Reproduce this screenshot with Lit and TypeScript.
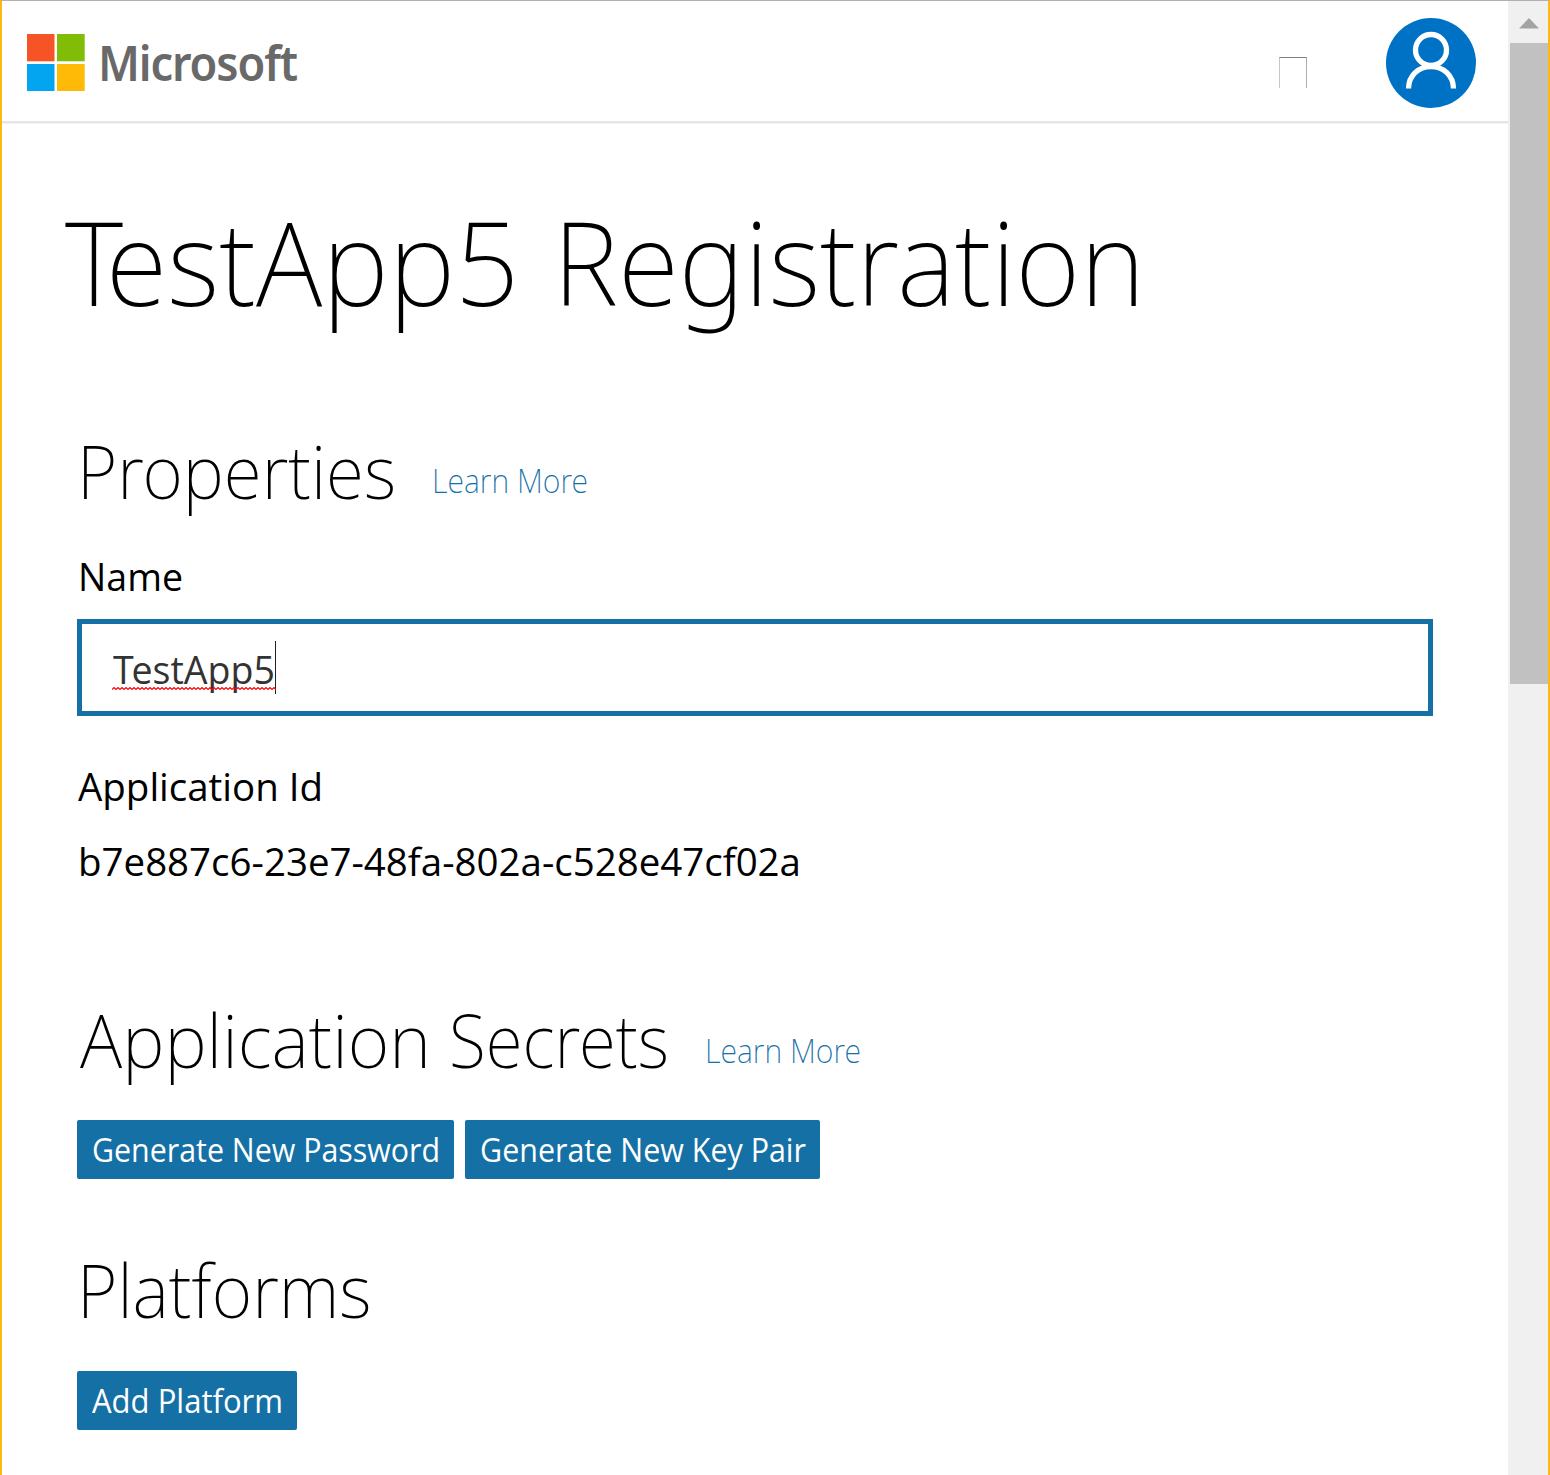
import { LitElement, html, css, svg } from "lit";
import { customElement, property } from "lit/decorators.js";

/** Single line of text condensed horizontally to a given advance width. */
@customElement("fit-text")
class FitText extends LitElement {
  @property({ type: Number }) width = 0;

  static styles = css`
    :host {
      display: block;
      flex: none;
      white-space: nowrap;
    }
    .run {
      display: inline-block;
      transform-origin: 0 50%;
    }
  `;

  updated() {
    const run = this.renderRoot.querySelector<HTMLElement>(".run")!;
    run.style.transform = "none";
    const natural = run.getBoundingClientRect().width;
    this.style.width = `${this.width}px`;
    run.style.transform = `scaleX(${this.width / natural})`;
  }

  render() {
    return html`<span class="run"><slot></slot></span>`;
  }
}

const avatar = svg`
  <circle cx="45" cy="45" r="45" fill="#0072c6"/>
  <g fill="none" stroke="#fff" stroke-width="5.300">
    <circle cx="45" cy="32" r="15.500"/>
    <path d="M22.500 70.500C22.700 57.500 32.500 48.600 45 48.600S67.300 57.500 67.500 70.500"/>
  </g>`;

@customElement("app-root")
class AppRoot extends LitElement {
  static styles = css`
    * {
      box-sizing: border-box;
    }
    :host {
      display: block;
      font-family: "Open Sans", "Noto Sans", sans-serif;
      color: #000;
    }
    .window {
      display: flex;
      height: 1475px;
      overflow: hidden;
      background: #fff;
      border: 2px solid #fdb913;
      border-top: 1px solid #b0b0b0;
      border-bottom: 0;
    }
    .page {
      flex: 1;
      min-width: 0;
    }
    .header {
      display: flex;
      align-items: flex-start;
      height: 122px;
      padding-left: 25px;
      padding-right: 32px;
      border-bottom: 2px solid #e5e5e5;
      box-shadow: 0 1px 0 #f3f3f3;
    }
    .logo {
      flex: none;
      margin-top: 33px;
    }
    .brand {
      margin: 28px 0 0 13px;
      font-family: "Noto Sans", "Open Sans", sans-serif;
      font-size: 49px;
      font-weight: 620;
      letter-spacing: -1.2px;
      line-height: 66px;
      color: #696969;
    }
    .glyph {
      width: 28px;
      height: 31px;
      margin: 56px 79px 0 auto;
      border: 1px solid #c6c6c6;
      border-top-color: #808080;
      border-right-color: #adadad;
      border-bottom: 0;
    }
    .avatar {
      flex: none;
      margin-top: 17px;
    }
    .title,
    .heading {
      display: flex;
      margin: 0;
      font-family: "Noto Sans", "Open Sans", sans-serif;
      font-weight: 250;
    }
    .title {
      gap: 34px;
      margin: 58px 0 0 63px;
      font-size: 117.2px;
      line-height: 160px;
    }
    .kern {
      letter-spacing: -0.15em;
    }
    .section {
      display: flex;
      align-items: flex-start;
      height: 100px;
      padding-left: 75px;
    }
    .heading {
      gap: 18px;
      font-size: 74.5px;
      line-height: 100px;
    }
    .properties {
      margin-top: 79px;
    }
    .secrets {
      margin-top: 103px;
      padding-left: 78px;
    }
    .platforms {
      margin-top: 60px;
    }
    .learn {
      margin: 10px 0 0 36px;
      font-family: "Noto Sans", "Open Sans", sans-serif;
      font-size: 33.6px;
      font-weight: 250;
      line-height: 100px;
      color: #1570a6;
      text-decoration: none;
    }
    .secrets .learn {
      margin-top: 11px;
    }
    .label {
      padding-left: 76px;
      font-size: 39.2px;
      line-height: 50px;
    }
    .name {
      margin-top: 31px;
    }
    .input {
      display: flex;
      align-items: center;
      width: 1356px;
      height: 97px;
      margin: 18px 0 0 75px;
      padding: 0 0 0 30px;
      border: 5px solid #1570a6;
      font-size: 39.2px;
      color: #333;
    }
    .value {
      position: relative;
      height: 53px;
      padding-left: 1px;
      border-right: 1px solid #222;
      line-height: 56px;
    }
    .value .kern {
      letter-spacing: -0.06em;
    }
    .squiggle {
      position: absolute;
      left: 0;
      top: 46px;
      display: block;
    }
    .appid {
      margin-top: 45px;
    }
    .guid {
      margin-top: 25px;
    }
    .buttons {
      display: flex;
      gap: 11px;
      padding-left: 75px;
      margin-top: 31px;
    }
    .platforms + .buttons {
      margin-top: 32px;
    }
    .button {
      height: 59px;
      padding: 0 14px 0 15px;
      border: 0;
      border-radius: 2px;
      background: #1570a6;
      color: #fff;
      font: 400 33.6px / 59px "Open Sans", "Noto Sans", sans-serif;
      text-align: left;
    }
    .scrollbar {
      flex: none;
      width: 40px;
      background: #f0f0f0;
    }
    .arrow {
      display: block;
    }
    .thumb {
      width: 38px;
      height: 641px;
      margin-left: 2px;
      background: #c1c1c1;
    }
  `;

  private squiggle() {
    let d = "M0 2.500";
    for (let x = 2; x <= 164; x += 2) d += `L${x} ${x % 4 ? 0.5 : 2.5}`;
    return d;
  }

  render() {
    return html`
      <div class="window">
        <main class="page">
          <header class="header">
            <svg class="logo" width="58" height="57" viewBox="0 0 58 57">
              <path fill="#f65326" d="M0 0h27.500v27.300H0z" />
              <path fill="#81bd06" d="M30 0h27.700v27.300H30z" />
              <path fill="#04a5f0" d="M0 30h27.500v27H0z" />
              <path fill="#ffba08" d="M30 30h27.700v27H30z" />
            </svg>
            <fit-text class="brand" width="199">Microsoft</fit-text>
            <span class="glyph"></span>
            <svg class="avatar" width="90" height="90" viewBox="0 0 90 90">${avatar}</svg>
          </header>
          <h1 class="title">
            <fit-text width="454"><span class="kern">T</span>estApp5</fit-text>
            <fit-text width="592">Registration</fit-text>
          </h1>
          <div class="section properties">
            <h2 class="heading"><fit-text width="319">Properties</fit-text></h2>
            <a class="learn"><fit-text width="156">Learn More</fit-text></a>
          </div>
          <div class="label name"><fit-text width="105">Name</fit-text></div>
          <div class="input">
            <div class="value">
              <fit-text width="162"><span class="kern">T</span>estApp5</fit-text>
              <svg class="squiggle" width="164" height="3">
                <path d=${this.squiggle()} fill="none" stroke="#f00" stroke-width="1.100" />
              </svg>
            </div>
          </div>
          <div class="label appid"><fit-text width="245">Application Id</fit-text></div>
          <div class="label guid"><fit-text width="723">b7e887c6-23e7-48fa-802a-c528e47cf02a</fit-text></div>
          <div class="section secrets">
            <h2 class="heading">
              <fit-text width="351">Application</fit-text>
              <fit-text width="220">Secrets</fit-text>
            </h2>
            <a class="learn"><fit-text width="156">Learn More</fit-text></a>
          </div>
          <div class="buttons">
            <button class="button"><fit-text width="348">Generate New Password</fit-text></button>
            <button class="button"><fit-text width="326">Generate New Key Pair</fit-text></button>
          </div>
          <div class="section platforms">
            <h2 class="heading"><fit-text width="294.500">Platforms</fit-text></h2>
          </div>
          <div class="buttons">
            <button class="button"><fit-text width="191">Add Platform</fit-text></button>
          </div>
        </main>
        <div class="scrollbar">
          <svg class="arrow" width="40" height="42">
            <path d="M21 17L31 27.500H11z" fill="#a3a3a3" />
          </svg>
          <div class="thumb"></div>
        </div>
      </div>
    `;
  }
}
